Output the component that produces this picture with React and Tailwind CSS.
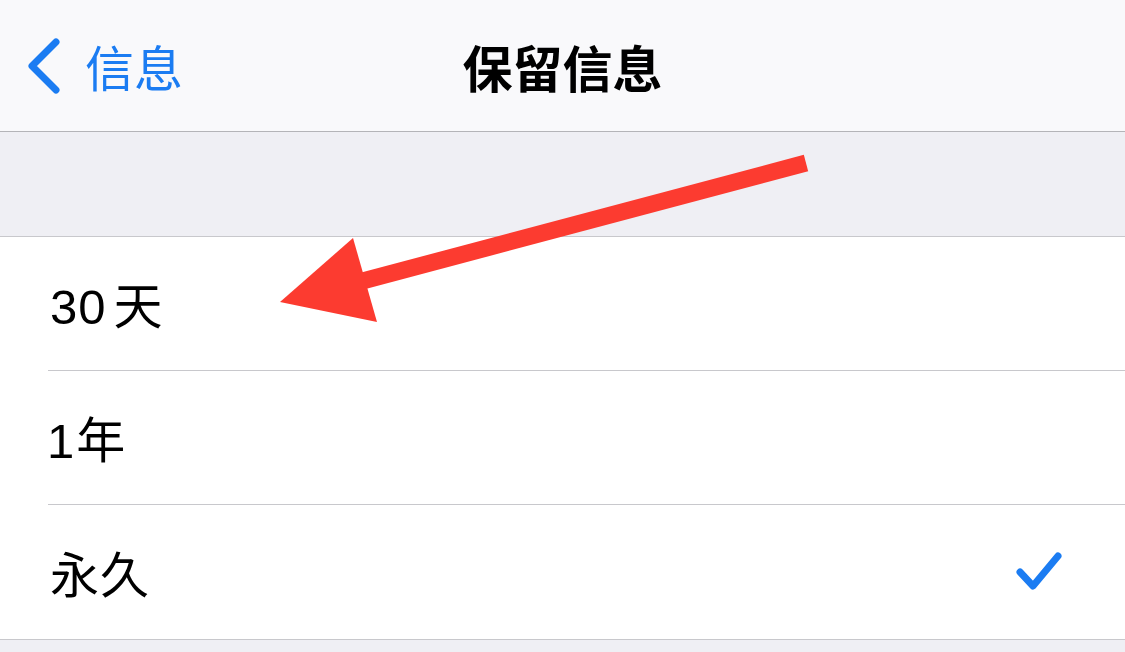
import { useState } from 'react'

const font = { fontFamily: '"Noto Sans CJK SC", "Noto Sans", sans-serif' }
const rowFont = { fontFamily: '"Liberation Sans", "Noto Sans CJK SC", sans-serif' }

const options = [
  { num: '30', unit: '天', gap: 'mr-[7px]' },
  { num: '1', unit: '年', gap: '-ml-[3px] mr-[1px]' },
  { num: '', unit: '永久', gap: '' },
]

function Row({ num, unit, gap, selected, last, onClick }) {
  return (
    <div className="pl-[48px] bg-white" onClick={onClick}>
      <div
        className={
          'h-[134px] flex items-center justify-between pr-[60px] ' +
          (last ? '' : 'border-b border-[#c8c8cc]')
        }
      >
        <span className="text-[49px] text-black leading-none pl-[2px] pt-[8px] flex" style={rowFont}>
          {num && <span className={'tracking-[1px] ' + gap}>{num}</span>}
          <span className="tracking-[1px]">{unit}</span>
        </span>
        {selected && (
          <svg width="50" height="50" viewBox="0 0 50 50" className="mt-[6px]">
            <path
              d="M5 22 L18 36 L43 6"
              fill="none"
              stroke="#1b7cf2"
              strokeWidth="7"
              strokeLinecap="round"
              strokeLinejoin="round"
            />
          </svg>
        )}
      </div>
    </div>
  )
}

export default function App() {
  const [picked, setPicked] = useState(2)

  return (
    <div className="relative w-[1125px] h-[652px] overflow-hidden bg-[#efeff4]" style={font}>
      <div className="h-[132px] bg-[#f9f9fb] border-b border-[#b4b4b8] relative flex items-center">
        <div className="flex items-center pl-[27px] gap-[24px] text-[#1b7cf2]">
          <svg width="34" height="58" viewBox="0 0 34 58">
            <path
              d="M29 5 L5 29 L29 53"
              fill="none"
              stroke="#1b7cf2"
              strokeWidth="7"
              strokeLinecap="round"
              strokeLinejoin="round"
            />
          </svg>
          <span className="text-[49px] leading-none">信息</span>
        </div>
        <div className="absolute inset-0 flex items-center justify-center pointer-events-none">
          <span className="text-[50px] font-bold text-black leading-none">保留信息</span>
        </div>
      </div>

      <div className="h-[105px] border-b border-[#c8c8cc]" />

      <div className="border-b border-[#c8c8cc]">
        {options.map((o, i) => (
          <Row
            key={o.unit}
            num={o.num}
            unit={o.unit}
            gap={o.gap}
            selected={picked === i}
            last={i === options.length - 1}
            onClick={() => setPicked(i)}
          />
        ))}
      </div>

      <svg
        className="absolute left-0 top-0 pointer-events-none"
        width="1125"
        height="652"
        viewBox="0 0 1125 652"
      >
        <line x1="806" y1="163" x2="355" y2="283" stroke="#fc3b30" strokeWidth="17" />
        <polygon points="280,302 353,238 377,322" fill="#fc3b30" />
      </svg>
    </div>
  )
}
